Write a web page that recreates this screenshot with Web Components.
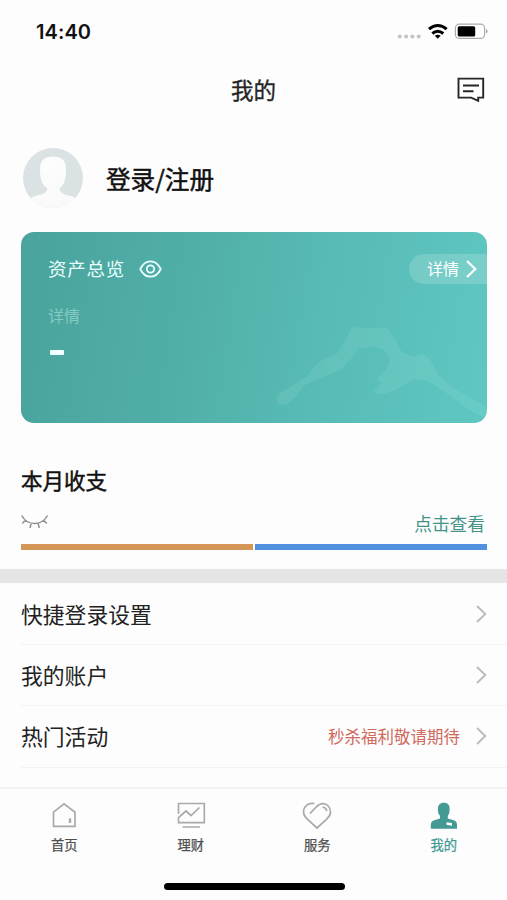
<!DOCTYPE html>
<html lang="zh-CN">
<head>
<meta charset="utf-8">
<meta name="viewport" content="width=device-width, initial-scale=1">
<title>我的</title>
<style>
html, body { margin: 0; height: 100%; background: #fdfdfd; overflow: hidden; }
body { font-family: "Noto Sans CJK SC", sans-serif; color: #222; }
</style>
</head>
<body>
<mine-app></mine-app>
<script>
const define = (name, html, render) => customElements.define(name, class extends HTMLElement {
  constructor() {
    super();
    this.attachShadow({ mode: 'open' }).innerHTML = '<style>*{box-sizing:border-box}svg{display:block;flex:none}</style>' + html;
  }
  connectedCallback() { if (render) render(this, this.shadowRoot); }
});

define('status-bar', `
<style>
:host { display: flex; height: 60px; padding: 2px 19px 0 36px; align-items: center; justify-content: space-between; color: #111; }
time { font: 600 20px/24px Inter, sans-serif; letter-spacing: .1px; padding-top: 1px; }
</style>
<time>14:40</time>
<svg width="92" height="20" viewBox="396 21 92 20">
  <g fill="#c3c3c3"><circle cx="399.8" cy="36.5" r="2"/><circle cx="406.1" cy="36.5" r="2"/><circle cx="412.4" cy="36.5" r="2"/><circle cx="418.7" cy="36.5" r="2"/></g>
  <g fill="none" stroke="#000" stroke-width="3"><path d="M429 29.2Q437.7 21.700 446.700 29.200"/><path d="M432.300 33.500Q437.700 29.100 443.300 33.500"/></g>
  <path d="M434.800 35.800Q437.700 33.500 440.700 35.800L437.700 38.700Z"/>
  <rect x="455.400" y="24.200" width="29.200" height="14.200" rx="4" fill="#fff" stroke="#aaa" stroke-width="1.200"/>
  <rect x="457.700" y="26.200" width="17.500" height="10.200" rx="1.500"/>
  <path d="M486 28.800Q489 31.300 486 33.800Z" fill="#aaa"/>
</svg>`);

define('nav-header', `
<style>
:host { display: grid; grid-template-columns: 1fr auto 1fr; align-items: center; height: 60px; padding: 0 22px; }
h1 { grid-column: 2; margin: 0; padding-bottom: 3px; font-size: 22.500px; font-weight: 400; -webkit-text-stroke: .35px; line-height: 30px; color: #262626; }
svg { justify-self: end; }
</style>
<h1><slot></slot></h1>
<svg width="28" height="26" viewBox="457 76 28 26" fill="none" stroke="#262626" stroke-width="1.900"><path d="M458.500 77.600H483.200V96.600H478.200V99.800L471.200 96.600H458.500Z"/><path d="M463 84.500H479M463 90.200H473.500"/></svg>`);

define('profile-entry', `
<style>
:host { display: flex; height: 111px; padding: 5px 22px 0; align-items: center; gap: 22px; }
span { font-size: 24.600px; font-weight: 400; -webkit-text-stroke: .5px; line-height: 34px; color: #111; }
</style>
<svg width="62" height="62" viewBox="0 0 62 62">
  <defs><clipPath id="c"><circle cx="31" cy="31" r="30"/></clipPath><linearGradient id="g" x2="0" y2="1"><stop offset="0" stop-color="#fdfdfd"/><stop offset="1" stop-color="#f9f9f9"/></linearGradient></defs>
  <g clip-path="url(#c)"><rect width="62" height="62" fill="#dbe2e4"/><path d="M18 22C18 13 23 9.500 31 9.500S44 13 44 22C44 33 42 38 37.500 41.500C38 46 42 47.500 49 49L56 52V62H6V52L13 49C20 47.500 25 46 25.500 41.500C20 38 18 33 18 22Z" fill="url(#g)"/></g>
</svg>
<span><slot></slot></span>`);

define('asset-card', `
<style>
:host { display: block; margin: .5px 20px 0 21px; height: 191.500px; border-radius: 13px; overflow: hidden; position: relative; color: #e9fffc;
  background: linear-gradient(99deg, #4aa39d 0%, #50aea8 34%, #58bbb5 64%, #5fc7c2 100%); }
.art { position: absolute; inset: 0; }
.body { position: relative; padding: 22px 0 0 27px; }
.head { display: flex; align-items: center; height: 31px; }
h2 { margin: 0; padding-bottom: 2px; font-weight: 400; font-size: 18.500px; letter-spacing: .75px; line-height: 28px; }
.eye { margin-left: 14px; }
.pill { margin-left: auto; display: flex; align-items: center; gap: 7px; width: 78px; height: 30px; padding-left: 19px; border-radius: 15px 0 0 15px; background: rgba(255,255,255,.17); font-size: 16px; line-height: 24px; color: #fff; }
.pill slot { display: block; padding-bottom: 2px; margin-left: -1px; }
.sub { margin-top: 18px; font-size: 16px; line-height: 24px; color: rgba(220,255,245,.42); }
.value { width: 13.500px; height: 5px; margin: 23px 0 0 2px; background: #f0ffff; border-radius: 1px; }
</style>
<svg class="art" width="466" height="192" viewBox="21 231.500 466 192"><path d="M276 397L281 392L307 376L316 364L324 358L337 353L344 342L352 326L371 328L387 327L397 342L402 352L414 356L422 353L429 358L439 375L454 388L481 403L487 407V419L467 408L447 393L427 380L414 379L394 390L382 394L373 392L381 383L377 378L387 368L390 358L384 349L371 346L359 348L351 358L342 368L321 378L304 385L297 395L286 405L278 403Z" fill="#a3eee0" fill-opacity=".15" stroke-linejoin="round"/></svg>
<div class="body">
  <div class="head"><h2><slot name="title"></slot></h2>
    <svg class="eye" width="23" height="18" viewBox="0 0 23 18" fill="none" stroke="#e9fffc" stroke-width="1.800"><path d="M1.200 9Q5 1.300 11.500 1.300T21.800 9Q18 16.700 11.500 16.700T1.200 9Z"/><circle cx="11.500" cy="9" r="3.700"/></svg>
    <div class="pill"><slot name="action"></slot><svg width="11" height="18" viewBox="0 0 11 18" fill="none" stroke="#fff" stroke-width="2.200"><path d="M1 1L9.300 9L1 17"/></svg></div>
  </div>
  <div class="sub"><slot name="label"></slot></div>
  <div class="value"></div>
</div>`);

define('month-summary', `
<style>
:host { display: block; height: 146px; padding: 42px 20px 0 21px; }
h2 { margin: 0; font-size: 21.500px; font-weight: 400; -webkit-text-stroke: .5px; line-height: 30px; color: #111; }
.line { display: flex; justify-content: space-between; align-items: center; height: 26px; margin-top: 15px; padding-right: 2px; font-size: 17.700px; line-height: 26px; color: #429487; }
.line svg { position: relative; top: -1px; }
.bars { display: grid; grid-template-columns: 1fr 1fr; gap: 2.500px; margin-top: 7.500px; height: 6px; }
.bars i:first-child { background: #d49756; } .bars i:last-child { background: #4f90df; }
</style>
<h2><slot></slot></h2>
<div class="line"><svg width="28" height="16" viewBox="0 0 28 16" fill="none" stroke="#909090" stroke-width="1.500"><path d="M.700 1.500Q5 9.500 13.500 9.500T26.500 1.500M4.500 6L1.300 9.500M10.300 9L9 14M17 9L18.300 14M22.500 6L25.800 9.500"/></svg><slot name="action"></slot></div>
<div class="bars"><i></i><i></i></div>`);

define('menu-row', `
<style>
:host { display: flex; align-items: center; height: 61.300px; margin-left: 21px; padding-right: 20px; border-bottom: 1.500px solid #f3f3f3; }
.label { flex: 1; font-size: 21.800px; line-height: 32px; color: #222; }
.note { font-size: 16.500px; line-height: 24px; color: #cf6a5c; }
svg { margin-left: 16px; }
</style>
<span class="label"><slot></slot></span><span class="note"><slot name="note"></slot></span>
<svg width="11" height="18" viewBox="0 0 11 18" fill="none" stroke="#bbb" stroke-width="1.900"><path d="M1 1L9.300 9L1 17"/></svg>`);

define('tab-item', `
<style>
:host { display: flex; flex-direction: column; align-items: center; color: #505050; }
:host([active]) { color: #439a94; }
.label { font-size: 13.300px; font-weight: 400; -webkit-text-stroke: .25px; line-height: 20px; margin-top: 5px; }
</style>
<svg width="30" height="28" viewBox="0 0 30 28" fill="none" stroke="#aaa" stroke-width="1.700"></svg>
<span class="label"><slot></slot></span>`, (el, root) => {
  const icons = {
    home: '<path d="M4.500 10.200L15 1.800L26 10.200V24.300H4.500Z"/><path d="M21 16.300V21" stroke-width="2.400"/>',
    chart: '<path d="M2.500 12V1.500H28.300V20.600H2.500V15.700L10 9L15 13.500L23.500 5.500M6.500 25H24" />',
    heart: '<path d="M12.300 1.700C6 .500 1.500 4.500 1.500 10C1.500 13 3 15 5.300 17.200L15 26L24.700 17.200C27 15 28.500 13 28.500 10C28.500 5 25 1.700 21 1.700C18 1.700 16 3.200 14 5.200L8 11.500M20.500 5Q24 5.500 24.800 9"/>',
    user: '<path d="M14.800.700C19 .700 20.800 3 20.600 7.500C20.500 11 20 12.500 18.800 13.600V16.500L25.500 18.500Q28 19.500 28 22.500V26.700H1.800V22.500Q1.800 19.500 4.500 18.500L11 16.500V13.600C9.500 12.500 9 11 8.900 7.500C8.700 3 11 .700 14.800.700Z" fill="#439a94" stroke="none"/><path d="M17.500 20.300L23 21V23.700L17.500 22.700Z" fill="#fff" stroke="none"/>'
  };
  root.querySelector('svg').innerHTML = icons[el.getAttribute('icon')];
});

define('tab-bar', `
<style>
:host { display: flex; flex-direction: column; align-items: center; height: 113px; border-top: 2px solid #f4f4f4; background: #fdfdfd; }
nav { width: 100%; display: grid; grid-template-columns: repeat(4, 1fr); padding: 13px 0 0 1px; }
.home { width: 181px; height: 7px; border-radius: 4px; background: #000; margin: auto 0 10px 2px; }
</style>
<nav><slot></slot></nav><div class="home"></div>`);

define('mine-app', `
<style>
:host { display: flex; flex-direction: column; height: 900px; width: 507px; background: #fdfdfd; }
main { flex: 1; min-height: 0; overflow: hidden; }
.band { height: 14px; background: #e5e5e5; }
.menu { padding-top: .700px; }
</style>
<status-bar></status-bar>
<nav-header>我的</nav-header>
<main>
  <profile-entry>登录/注册</profile-entry>
  <asset-card><span slot="title">资产总览</span><span slot="action">详情</span><span slot="label">详情</span></asset-card>
  <month-summary>本月收支<span slot="action">点击查看</span></month-summary>
  <div class="band"></div>
  <div class="menu">
    <menu-row>快捷登录设置</menu-row>
    <menu-row>我的账户</menu-row>
    <menu-row>热门活动<span slot="note">秒杀福利敬请期待</span></menu-row>
  </div>
</main>
<tab-bar>
  <tab-item icon="home">首页</tab-item>
  <tab-item icon="chart">理财</tab-item>
  <tab-item icon="heart">服务</tab-item>
  <tab-item icon="user" active>我的</tab-item>
</tab-bar>`);
</script>
</body>
</html>
